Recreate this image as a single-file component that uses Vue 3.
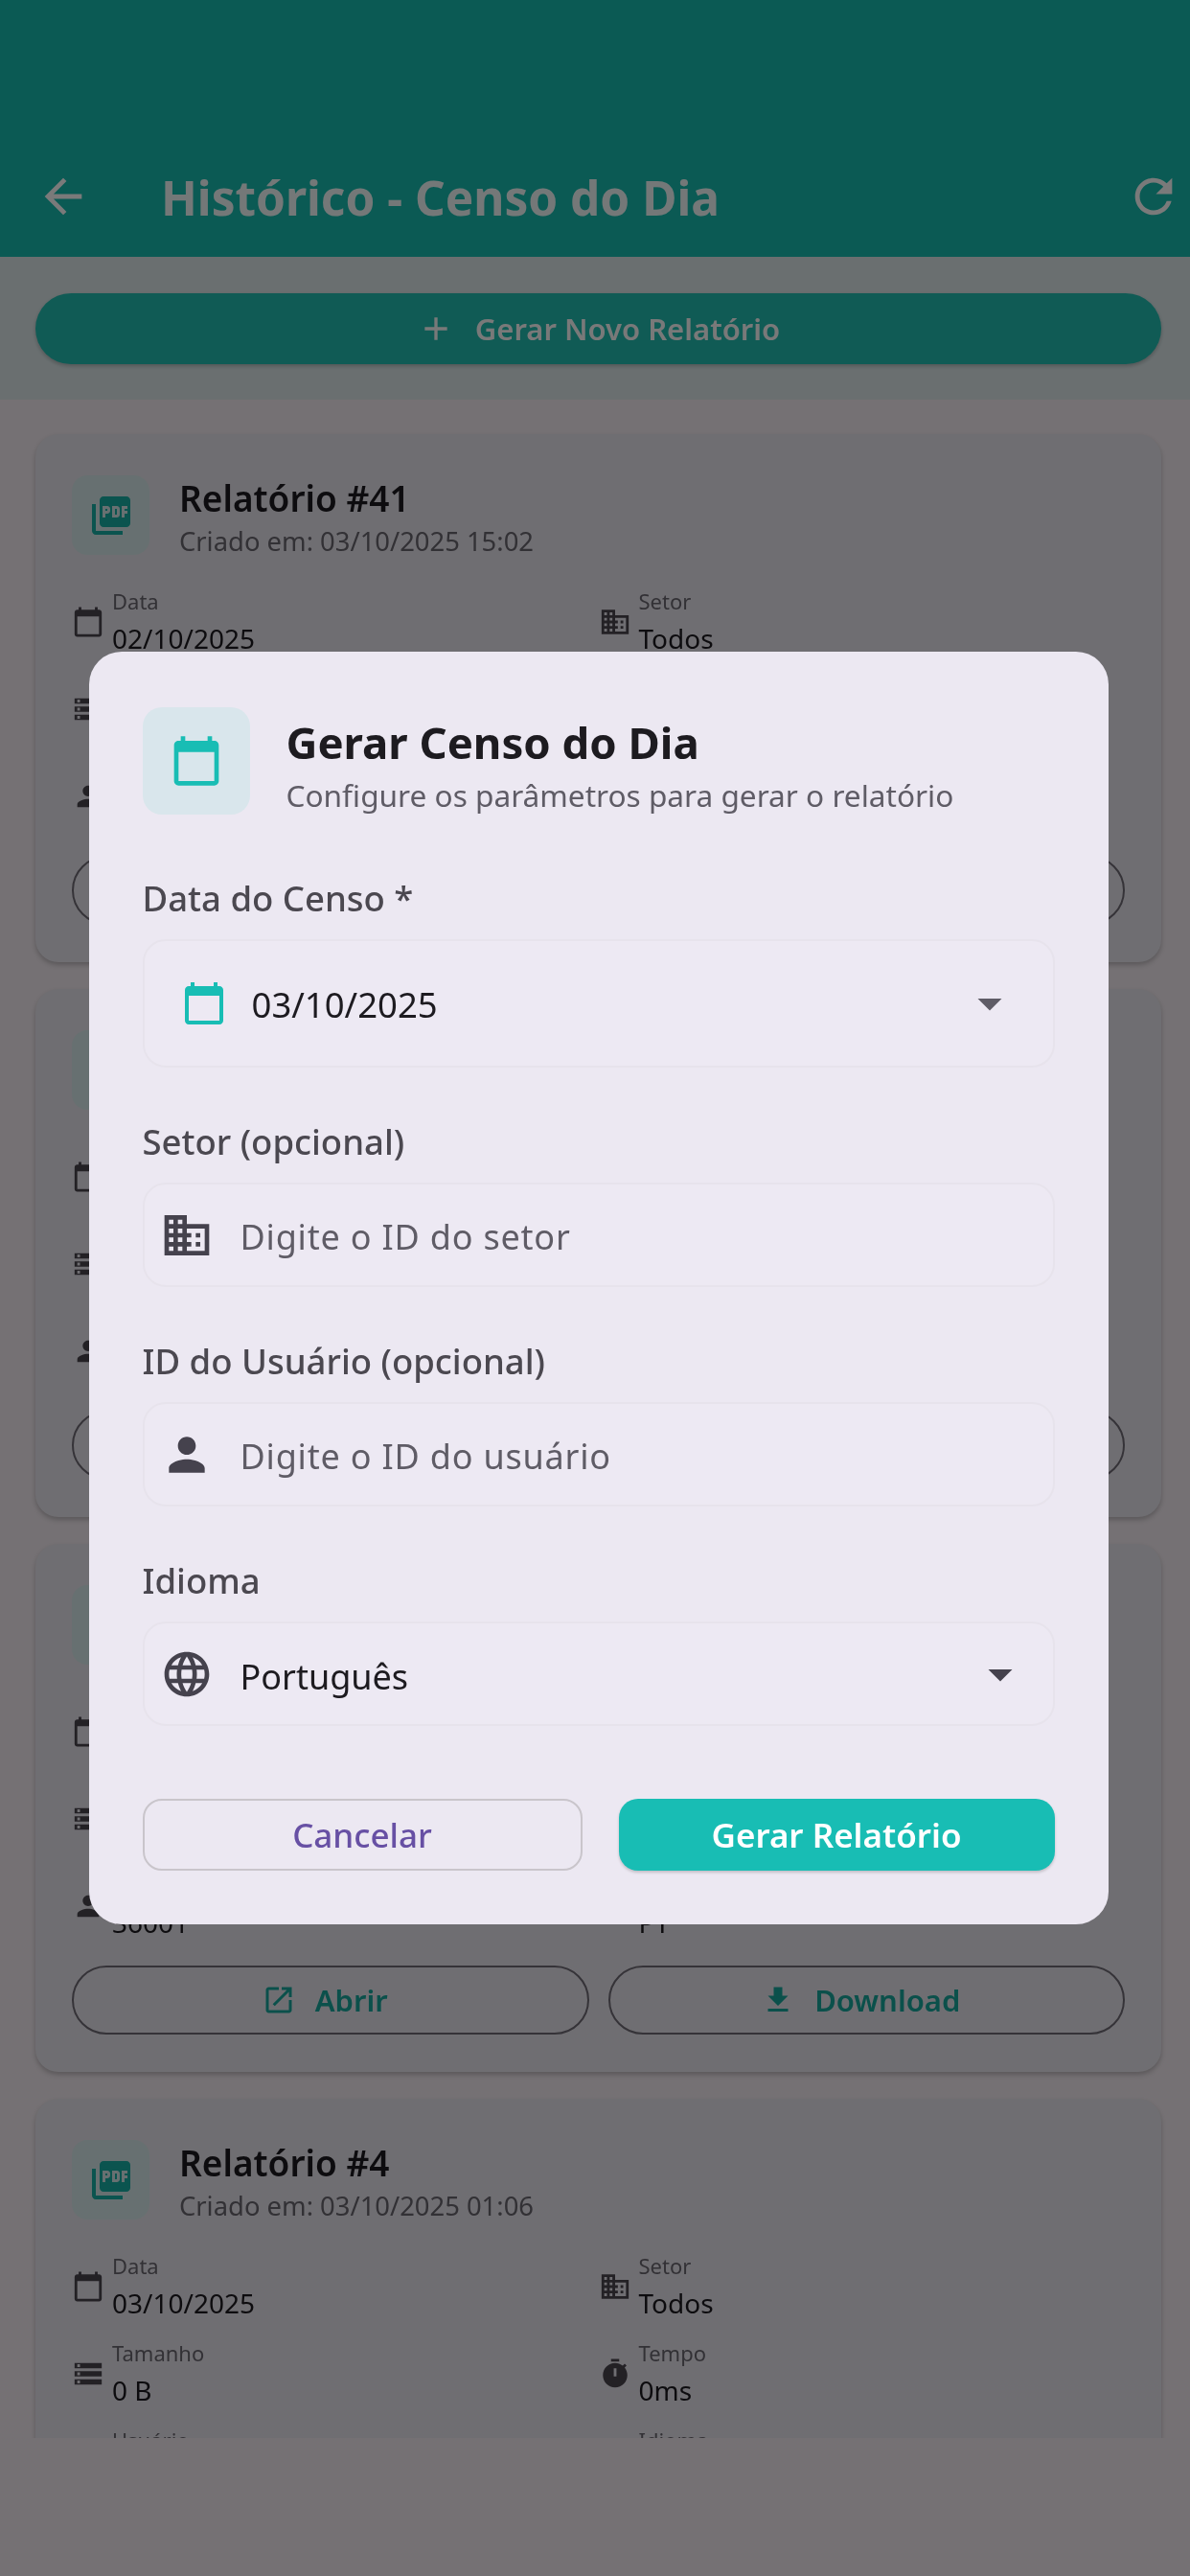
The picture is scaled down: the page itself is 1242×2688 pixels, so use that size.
<template>
  <div class="screen">
    <header class="appbar">
      <svg class="back" viewBox="0 0 24 24"><path :d="icons.back" /></svg>
      <h1>Histórico - Censo do Dia</h1>
      <svg class="refresh" viewBox="0 0 24 24"><path :d="icons.refresh" /></svg>
    </header>

    <div class="toolbar">
      <button class="new-report">
        <svg viewBox="0 0 24 24"><path :d="icons.add" /></svg>
        Gerar Novo Relatório
      </button>
    </div>

    <div class="list">
      <section v-for="report in reports" :key="report.id" class="card">
        <div class="card-head">
          <div class="pdf-box">
            <svg viewBox="0 0 24 24"><path :d="icons.pdf" /></svg>
          </div>
          <div>
            <h3>Relatório #{{ report.id }}</h3>
            <p>Criado em: {{ report.created }}</p>
          </div>
        </div>
        <div class="details">
          <div v-for="item in detailsOf(report)" :key="item.label" class="detail">
            <svg viewBox="0 0 24 24"><path :d="icons[item.icon]" /></svg>
            <div>
              <span class="detail-label">{{ item.label }}</span>
              <span class="detail-value">{{ item.value }}</span>
            </div>
          </div>
        </div>
        <div class="actions">
          <button>
            <svg viewBox="0 0 24 24"><path :d="icons.open" /></svg>
            Abrir
          </button>
          <button>
            <svg viewBox="0 0 24 24"><path :d="icons.download" /></svg>
            Download
          </button>
        </div>
      </section>
    </div>

    <div class="scrim">
      <div class="dialog">
        <div class="dialog-head">
          <div class="date-box">
            <svg viewBox="0 0 24 24"><path :d="icons.calendar" /></svg>
          </div>
          <div class="dialog-title">
            <h2>Gerar Censo do Dia</h2>
            <p>Configure os parâmetros para gerar o relatório</p>
          </div>
        </div>

        <label>Data do Censo *</label>
        <div class="field date-field">
          <svg class="teal" viewBox="0 0 24 24"><path :d="icons.calendar" /></svg>
          <span class="value">03/10/2025</span>
          <svg class="drop" viewBox="0 0 24 24"><path :d="icons.drop" /></svg>
        </div>

        <label>Setor (opcional)</label>
        <div class="field">
          <svg viewBox="0 0 24 24"><path :d="icons.business" /></svg>
          <span class="hint">Digite o ID do setor</span>
        </div>

        <label>ID do Usuário (opcional)</label>
        <div class="field">
          <svg viewBox="0 0 24 24"><path :d="icons.person" /></svg>
          <span class="hint">Digite o ID do usuário</span>
        </div>

        <label>Idioma</label>
        <div class="field lang-field">
          <svg viewBox="0 0 24 24"><path :d="icons.language" /></svg>
          <span class="value">Português</span>
          <svg class="drop" viewBox="0 0 24 24"><path :d="icons.drop" /></svg>
        </div>

        <div class="dialog-actions">
          <button class="cancel">Cancelar</button>
          <button class="generate">Gerar Relatório</button>
        </div>
      </div>
    </div>
  </div>
</template>

<script setup>
const icons = {
  back: 'M20 11H7.83l5.59-5.59L12 4l-8 8 8 8 1.41-1.41L7.83 13H20v-2z',
  refresh: 'M17.65 6.35C16.2 4.9 14.21 4 12 4c-4.42 0-7.99 3.58-7.99 8s3.57 8 7.99 8c3.73 0 6.84-2.55 7.73-6h-2.08c-.82 2.33-3.04 4-5.65 4-3.31 0-6-2.69-6-6s2.69-6 6-6c1.66 0 3.14.69 4.22 1.78L13 11h7V4l-2.35 2.35z',
  add: 'M19 13h-6v6h-2v-6H5v-2h6V5h2v6h6v2z',
  pdf: 'M20 2H8c-1.1 0-2 .9-2 2v12c0 1.1.9 2 2 2h12c1.1 0 2-.9 2-2V4c0-1.1-.9-2-2-2zm-8.5 7.5c0 .83-.67 1.5-1.5 1.5H9v2H7.5V7H10c.83 0 1.5.67 1.5 1.5v1zm5 2c0 .83-.67 1.5-1.5 1.5h-2.5V7H15c.83 0 1.5.67 1.5 1.5v3zm4-3H19v1h1.5V11H19v2h-1.5V7h3v1.5zM9 9.5h1v-1H9v1zM4 6H2v14c0 1.1.9 2 2 2h14v-2H4V6zm10 5.5h1v-3h-1v3z',
  calendar: 'M20 3h-1V1h-2v2H7V1H5v2H4c-1.1 0-2 .9-2 2v16c0 1.1.9 2 2 2h16c1.1 0 2-.9 2-2V5c0-1.1-.9-2-2-2zm0 18H4V8h16v13z',
  business: 'M12 7V3H2v18h20V7H12zM6 19H4v-2h2v2zm0-4H4v-2h2v2zm0-4H4V9h2v2zm0-4H4V5h2v2zm4 12H8v-2h2v2zm0-4H8v-2h2v2zm0-4H8V9h2v2zm0-4H8V5h2v2zm10 12h-8v-2h2v-2h-2v-2h2v-2h-2V9h8v10zm-2-8h-2v2h2v-2zm0 4h-2v2h2v-2z',
  person: 'M12 12c2.21 0 4-1.79 4-4s-1.79-4-4-4-4 1.79-4 4 1.79 4 4 4zm0 2c-2.67 0-8 1.34-8 4v2h16v-2c0-2.66-5.33-4-8-4z',
  language: 'M11.99 2C6.47 2 2 6.48 2 12s4.47 10 9.99 10C17.52 22 22 17.52 22 12S17.52 2 11.99 2zm6.93 6h-2.95c-.32-1.25-.78-2.45-1.38-3.56 1.84.63 3.37 1.91 4.33 3.56zM12 4.04c.83 1.2 1.48 2.53 1.91 3.96h-3.82c.43-1.43 1.08-2.76 1.91-3.96zM4.26 14C4.1 13.36 4 12.69 4 12s.1-1.36.26-2h3.38c-.08.66-.14 1.32-.14 2 0 .68.06 1.34.14 2H4.26zm.82 2h2.95c.32 1.25.78 2.45 1.38 3.56-1.84-.63-3.37-1.9-4.33-3.56zm2.95-8H5.08c.96-1.66 2.49-2.93 4.33-3.56C8.81 5.55 8.35 6.75 8.03 8zM12 19.96c-.83-1.2-1.48-2.53-1.91-3.96h3.82c-.43 1.43-1.08 2.76-1.91 3.96zM14.34 14H9.66c-.09-.66-.16-1.32-.16-2 0-.68.07-1.35.16-2h4.68c.09.65.16 1.32.16 2 0 .68-.07 1.34-.16 2zm.25 5.56c.6-1.11 1.06-2.31 1.38-3.56h2.95c-.96 1.65-2.49 2.93-4.33 3.56zM16.36 14c.08-.66.14-1.32.14-2 0-.68-.06-1.34-.14-2h3.38c.16.64.26 1.31.26 2s-.1 1.36-.26 2h-3.38z',
  drop: 'M7 10l5 5 5-5z',
  storage: 'M2 20h20v-4H2v4zm2-3h2v2H4v-2zM2 4v4h20V4H2zm4 3H4V5h2v2zm-4 7h20v-4H2v4zm2-3h2v2H4v-2z',
  timer: 'M9 1h6v2H9z M19.03 7.39l1.42-1.42c-.43-.51-.9-.99-1.41-1.41l-1.42 1.42C16.07 4.74 14.12 4 12 4c-4.97 0-9 4.03-9 9s4.02 9 9 9 9-4.03 9-9c0-2.12-.74-4.07-1.97-5.61zM13 14h-2V8h2v6z',
  open: 'M19 19H5V5h7V3H5c-1.11 0-2 .9-2 2v14c0 1.1.89 2 2 2h14c1.1 0 2-.9 2-2v-7h-2v7zM14 3v2h3.59l-9.83 9.83 1.41 1.41L19 6.41V10h2V3h-7z',
  download: 'M19 9h-4V3H9v6H5l7 7 7-7zM5 18v2h14v-2H5z',
}

const reports = [
  { id: 41, created: '03/10/2025 15:02', date: '02/10/2025', size: '0 B', time: '0ms', user: '36001', lang: 'PT' },
  { id: 40, created: '03/10/2025 14:48', date: '02/10/2025', size: '0 B', time: '0ms', user: '36001', lang: 'PT' },
  { id: 39, created: '03/10/2025 14:30', date: '02/10/2025', size: '0 B', time: '0ms', user: '36001', lang: 'PT' },
  { id: 4, created: '03/10/2025 01:06', date: '03/10/2025', size: '0 B', time: '0ms', user: '36001', lang: 'PT' },
]

function detailsOf(report) {
  return [
    { icon: 'calendar', label: 'Data', value: report.date },
    { icon: 'business', label: 'Setor', value: 'Todos' },
    { icon: 'storage', label: 'Tamanho', value: report.size },
    { icon: 'timer', label: 'Tempo', value: report.time },
    { icon: 'person', label: 'Usuário', value: report.user },
    { icon: 'language', label: 'Idioma', value: report.lang },
  ]
}
</script>

<style scoped>
.screen {
  position: relative;
  width: 1242px;
  height: 2688px;
  overflow: hidden;
  background: #f4ecf2;
  font-family: "Noto Sans", "Open Sans", sans-serif;
  filter: blur(0.5px);
}

svg {
  display: block;
  flex: none;
  fill: currentColor;
}

h1, h2, h3, p {
  margin: 0;
}

button {
  font-family: inherit;
  cursor: pointer;
}

.appbar {
  display: flex;
  align-items: center;
  height: 268px;
  padding: 149px 0 7px 37px;
  box-sizing: border-box;
  background: #18bdb0;
  color: #fff;
}

.back {
  width: 58px;
  height: 58px;
}

.appbar h1 {
  margin-left: 73px;
  padding-top: 3px;
  font-size: 49.5px;
  font-weight: 700;
  line-height: 109px;
  white-space: nowrap;
  opacity: 0.95;
}

.refresh {
  width: 58px;
  height: 58px;
  margin-left: auto;
  margin-right: 9px;
}

.toolbar {
  height: 149px;
  padding: 38px 30px 37px 37px;
  box-sizing: border-box;
  background: #dde9eb;
}

.new-report {
  display: flex;
  align-items: center;
  justify-content: center;
  gap: 21px;
  width: 1175px;
  height: 74px;
  border: none;
  border-radius: 37px;
  background: #18bdb0;
  color: #fff;
  font-size: 31px;
  font-weight: 600;
  opacity: 0.95;
  box-shadow: 0 2px 4px rgba(0, 0, 0, 0.25);
}

.new-report svg {
  width: 40px;
  height: 40px;
}

.list {
  display: flex;
  flex-direction: column;
  gap: 28px;
  height: 2127px;
  padding: 36px 0 0 37px;
  box-sizing: border-box;
  overflow: hidden;
}

.card {
  flex: none;
  width: 1175px;
  height: 551px;
  padding: 43px 38px 39px;
  box-sizing: border-box;
  border-radius: 24px;
  background: #e9e6ee;
  box-shadow: 0 3px 5px rgba(0, 0, 0, 0.22);
}

.card-head {
  display: flex;
  gap: 31px;
  height: 83px;
  margin-bottom: 33px;
}

.pdf-box {
  display: flex;
  align-items: center;
  justify-content: center;
  width: 81px;
  height: 83px;
  border-radius: 16px;
  background: #d8ebec;
  color: #18b0a5;
}

.pdf-box svg {
  width: 48px;
  height: 48px;
}

.card-head h3 {
  margin-top: 2px;
  font-size: 37px;
  font-weight: 600;
  line-height: 44px;
  color: #1d1b20;
}

.card-head p {
  margin-top: 5px;
  font-size: 27.4px;
  line-height: 36px;
  color: #6a6770;
}

.details {
  display: grid;
  grid-template-columns: 549.5px 549.5px;
  grid-auto-rows: 73px;
  row-gap: 18px;
}

.detail {
  display: flex;
  align-items: center;
  gap: 8px;
  color: #49454f;
}

.detail svg {
  width: 34px;
  height: 34px;
}

.detail-label {
  display: block;
  font-size: 22px;
  line-height: 30px;
  color: #6a6770;
}

.detail-value {
  display: block;
  margin-top: 5px;
  font-size: 28px;
  line-height: 38px;
  color: #1d1b20;
}

.actions {
  display: flex;
  gap: 20px;
  margin-top: 26px;
}

.actions button {
  display: flex;
  flex: 1;
  align-items: center;
  justify-content: center;
  gap: 20px;
  height: 72px;
  padding: 0 12px 0 0;
  border: 2px solid #6f6b75;
  border-radius: 36px;
  background: transparent;
  color: #18a89d;
  font-size: 31px;
  font-weight: 600;
}

.actions svg {
  width: 36px;
  height: 36px;
}

.scrim {
  position: absolute;
  inset: 0;
  display: flex;
  align-items: center;
  justify-content: center;
  padding-left: 7px;
  background: rgba(0, 0, 0, 0.52);
}

.dialog {
  display: flex;
  flex-direction: column;
  width: 1064px;
  padding: 57px 56px 56px;
  box-sizing: border-box;
  border-radius: 34px;
  background: #ece8f2;
  color: #49454f;
}

.dialog-head {
  display: flex;
  align-items: center;
  gap: 38px;
  margin-bottom: 67px;
}

.dialog-title {
  padding-top: 10px;
}

.date-box {
  display: flex;
  align-items: center;
  justify-content: center;
  width: 112px;
  height: 112px;
  border-radius: 20px;
  background: #d9e6ec;
  color: #18bdb4;
}

.date-box svg {
  width: 56px;
  height: 56px;
}

.dialog-head h2 {
  font-size: 45.5px;
  font-weight: 700;
  line-height: 54px;
  color: #1d1b20;
}

.dialog-head p {
  margin-top: 8px;
  font-size: 31.6px;
  line-height: 42px;
  color: #5f5c66;
}

label {
  display: block;
  margin-bottom: 24px;
  font-size: 36.5px;
  font-weight: 500;
  line-height: 38px;
  color: #4b4850;
}

.field {
  display: flex;
  align-items: center;
  height: 109px;
  margin-bottom: 58px;
  padding-left: 16px;
  box-sizing: border-box;
  border: 2px solid #e7e3ec;
  border-radius: 24px;
  background: #ede9f3;
}

.field svg {
  width: 56px;
  height: 56px;
  color: #45424d;
}

.field .teal {
  width: 48px;
  height: 48px;
  color: #18bdb4;
}

.date-field {
  height: 134px;
  padding-left: 38px;
}

.date-field .value {
  margin-left: 26px;
  padding-top: 2px;
}

.value,
.hint {
  padding-top: 4px;
  font-size: 36.5px;
  color: #1d1b20;
}

.hint {
  margin-left: 28px;
  font-size: 36px;
  letter-spacing: 0.8px;
  color: #5f5c66;
}

.lang-field .value {
  margin-left: 28px;
  padding-top: 6px;
  font-size: 36px;
}

.field .drop {
  width: 60px;
  height: 60px;
  margin-left: auto;
  margin-right: 36px;
  color: #5f5c66;
}

.lang-field .drop {
  margin-right: 25px;
  color: #45424d;
}

.lang-field {
  margin-bottom: 76px;
}

.dialog-actions {
  display: flex;
  gap: 38px;
}

.dialog-actions button {
  flex: 1;
  height: 75px;
  border-radius: 20px;
  font-size: 35px;
  font-weight: 600;
}

.cancel {
  border: 2px solid #c9c5cb;
  background: transparent;
  color: #6750a4;
}

.dialog-actions .cancel {
  font-weight: 500;
}

.generate {
  border: none;
  background: #18bdb4;
  color: #fff;
  box-shadow: 0 2px 3px rgba(0, 0, 0, 0.18);
}
</style>

<style>
html, body {
  margin: 0;
  background: #f4ecf2;
}
</style>
